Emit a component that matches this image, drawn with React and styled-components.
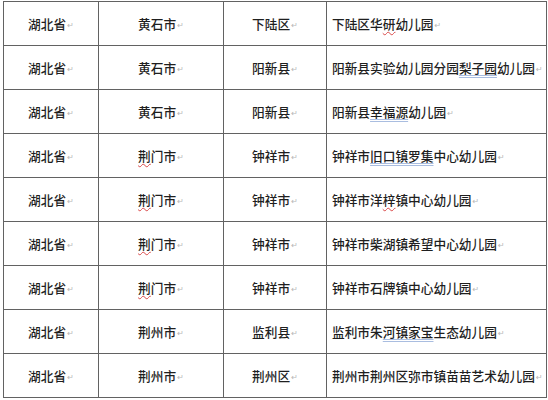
import React from "react";
import styled, { createGlobalStyle } from "styled-components";

const Global = createGlobalStyle`
  html, body { margin: 0; padding: 0; background: #fff; }
  body { width: 548px; height: 400px; overflow: hidden; }
`;

const Page = styled.div`
  padding: 1px 0 0 3px;
`;

const Table = styled.table`
  border-collapse: collapse;
  table-layout: fixed;
  width: 543px;
  font-family: "Noto Sans CJK SC", "Microsoft YaHei", sans-serif;
  font-size: 12.7px;
  font-weight: 500;
  color: #1f1f1f;
`;

const Row = styled.tr`
  height: 44px;
`;

const Cell = styled.td`
  border: 1px solid #626262;
  padding: 3px 0 0 ${(p) => (p.$left ? "5px" : "0")};
  text-align: ${(p) => (p.$left ? "left" : "center")};
  vertical-align: middle;
  white-space: nowrap;
  overflow: hidden;
  line-height: 16px;
`;

const Mark = styled.span`
  font-family: "DejaVu Sans", sans-serif;
  font-weight: 400;
  font-size: 8px;
  color: #b8b8b8;
  margin-left: 1px;
  vertical-align: 1px;
`;

const Spell = styled.span`
  text-decoration: underline wavy #d94a4a;
  text-decoration-thickness: 1px;
  text-underline-offset: 2px;
`;

const Grammar = styled.span`
  text-decoration: underline double #a9bde0;
  text-decoration-thickness: 1px;
  text-underline-offset: 2px;
`;

const widths = [95, 125, 103, 220];

function Txt({ parts }) {
  return (
    <>
      {parts.map((p, i) =>
        typeof p === "string" ? (
          <React.Fragment key={i}>{p}</React.Fragment>
        ) : p.s ? (
          <Spell key={i}>{p.s}</Spell>
        ) : (
          <Grammar key={i}>{p.g}</Grammar>
        )
      )}
      <Mark>↵</Mark>
    </>
  );
}

const rows = [
  [["湖北省"], ["黄石市"], ["下陆区"], ["下陆区华", { s: "研" }, "幼儿园"]],
  [["湖北省"], ["黄石市"], ["阳新县"], ["阳新县实验幼儿园分园", { g: "梨子园" }, "幼儿园"]],
  [["湖北省"], ["黄石市"], ["阳新县"], ["阳新县", { g: "幸福源" }, "幼儿园"]],
  [["湖北省"], [{ s: "荆" }, "门市"], ["钟祥市"], ["钟祥市", { g: "旧口镇罗集" }, "中心幼儿园"]],
  [["湖北省"], [{ s: "荆" }, "门市"], ["钟祥市"], ["钟祥市洋", { s: "梓" }, "镇中心幼儿园"]],
  [["湖北省"], [{ s: "荆" }, "门市"], ["钟祥市"], ["钟祥市柴湖镇希望中心幼儿园"]],
  [["湖北省"], [{ s: "荆" }, "门市"], ["钟祥市"], ["钟祥市石牌镇中心幼儿园"]],
  [["湖北省"], ["荆州市"], ["监利县"], ["监利市朱", { g: "河镇家宝" }, "生态幼儿园"]],
  [["湖北省"], ["荆州市"], ["荆州区"], ["荆州市荆州区弥市镇苗苗艺术幼儿园"]],
];

export default function App() {
  return (
    <Page>
      <Global />
      <Table>
        <colgroup>
          {widths.map((w, i) => (
            <col key={i} style={{ width: w }} />
          ))}
        </colgroup>
        <tbody>
          {rows.map((r, i) => (
            <Row key={i}>
              {r.map((c, j) => (
                <Cell key={j} $left={j === 3}>
                  <Txt parts={c} />
                </Cell>
              ))}
            </Row>
          ))}
        </tbody>
      </Table>
    </Page>
  );
}
